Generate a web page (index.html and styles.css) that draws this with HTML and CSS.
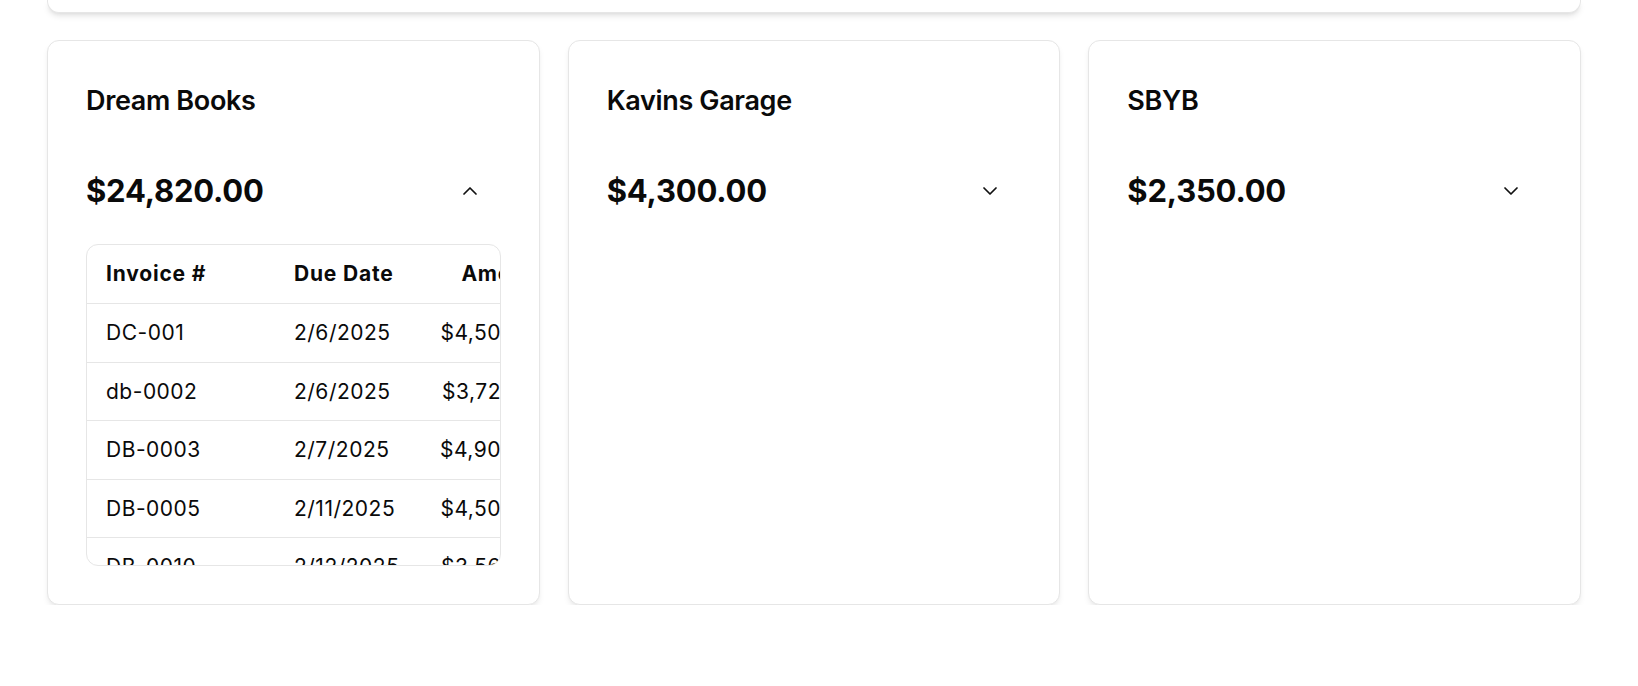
FILE: index.html
```html
<!DOCTYPE html>
<html lang="en">
<head>
<meta charset="utf-8">
<title>Customers</title>
<link rel="stylesheet" href="styles.css">
</head>
<body>
<div class="page">
  <div class="top-card"></div>
  <div class="grid">
    <section class="card">
      <h2 class="card-title">Dream Books</h2>
      <div class="amount-row">
        <span class="amount">$24,820.00</span>
        <button class="toggle" type="button" aria-label="Collapse">
          <svg viewBox="0 0 24 24" width="24" height="24" fill="none" stroke="currentColor" stroke-width="1.75" stroke-linecap="round" stroke-linejoin="round"><path d="m18 15-6-6-6 6"/></svg>
        </button>
      </div>
      <div class="table-wrap">
        <table class="inv-table">
          <thead>
            <tr><th class="col-inv">Invoice #</th><th class="col-date">Due Date</th><th class="col-amt">Amount</th></tr>
          </thead>
          <tbody>
            <tr><td>DC-001</td><td>2/6/2025</td><td class="col-amt">$4,500.00</td></tr>
            <tr><td>db-0002</td><td>2/6/2025</td><td class="col-amt">$3,720.00</td></tr>
            <tr><td>DB-0003</td><td>2/7/2025</td><td class="col-amt">$4,900.00</td></tr>
            <tr><td>DB-0005</td><td>2/11/2025</td><td class="col-amt">$4,500.00</td></tr>
            <tr><td>DB-0010</td><td>2/12/2025</td><td class="col-amt">$3,560.00</td></tr>
            <tr><td>DB-0011</td><td>2/13/2025</td><td class="col-amt">$3,640.00</td></tr>
          </tbody>
        </table>
      </div>
    </section>
    <section class="card">
      <h2 class="card-title">Kavins Garage</h2>
      <div class="amount-row">
        <span class="amount">$4,300.00</span>
        <button class="toggle" type="button" aria-label="Expand">
          <svg viewBox="0 0 24 24" width="24" height="24" fill="none" stroke="currentColor" stroke-width="1.75" stroke-linecap="round" stroke-linejoin="round"><path d="m6 9 6 6 6-6"/></svg>
        </button>
      </div>
    </section>
    <section class="card">
      <h2 class="card-title">SBYB</h2>
      <div class="amount-row">
        <span class="amount">$2,350.00</span>
        <button class="toggle" type="button" aria-label="Expand">
          <svg viewBox="0 0 24 24" width="24" height="24" fill="none" stroke="currentColor" stroke-width="1.75" stroke-linecap="round" stroke-linejoin="round"><path d="m6 9 6 6 6-6"/></svg>
        </button>
      </div>
    </section>
  </div>
</div>
</body>
</html>
```

FILE: styles.css
```css
* { box-sizing: border-box; }

html, body {
  margin: 0;
  background: #ffffff;
}

body {
  font-family: "Inter", "Noto Sans", "Liberation Sans", sans-serif;
  color: #0a0a0a;
}

.page {
  padding: 0 57px 0 47px;
}

.top-card {
  height: 12.5px;
  background: #fff;
  border: 1px solid #e6e6e6;
  border-top: none;
  border-radius: 0 0 12px 12px;
  box-shadow: 0 4px 6px -1px rgba(0,0,0,0.10), 0 2px 4px -2px rgba(0,0,0,0.08);
}

.grid {
  margin-top: 27px;
  display: grid;
  grid-template-columns: repeat(3, minmax(0, 1fr));
  gap: 28px;
  align-items: stretch;
}

.card {
  min-width: 0;
  background: #fff;
  border: 1px solid #e6e6e6;
  border-radius: 12px;
  padding: 38px;
  box-shadow: 0 4px 6px -1px rgba(0,0,0,0.08), 0 2px 4px -2px rgba(0,0,0,0.06);
  display: flex;
  flex-direction: column;
}

.card-title {
  margin: 0;
  font-size: 27px;
  line-height: 44px;
  font-weight: 600;
  letter-spacing: -0.35px;
}

.amount-row {
  margin-top: 48px;
  height: 40px;
  display: flex;
  align-items: center;
  justify-content: space-between;
}

.amount {
  font-size: 31px;
  font-weight: 700;
  line-height: 40px;
  letter-spacing: -0.2px;
}

.toggle {
  margin-right: 11px;
  padding: 8px;
  border: none;
  background: transparent;
  color: #111;
  display: flex;
  align-items: center;
  justify-content: center;
}

.toggle svg { display: block; }

.table-wrap {
  margin-top: 33px;
  height: 322px;
  border: 1px solid #e6e6e6;
  border-radius: 12px;
  overflow: hidden;
}

.inv-table {
  border-collapse: collapse;
  font-size: 21px;
  line-height: 21.6px;
  letter-spacing: 0.5px;
  white-space: nowrap;
}

.inv-table th,
.inv-table td {
  padding: 18px 19px;
  text-align: left;
  border-bottom: 1px solid #e6e6e6;
}

.inv-table th {
  padding-top: 18.5px;
  padding-bottom: 18.5px;
  font-weight: 700;
  letter-spacing: 0.8px;
}

.inv-table td {
  font-weight: 400;
}

.col-inv { width: 188px; min-width: 188px; }
.col-date { width: 146px; min-width: 146px; }
.inv-table .col-amt { text-align: right; }
```
